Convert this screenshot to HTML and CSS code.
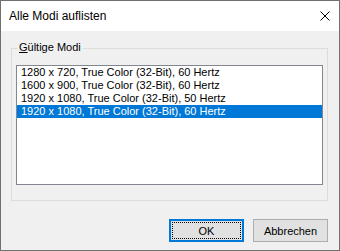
FILE: index.html
```html
<!DOCTYPE html>
<html lang="de">
<head>
<meta charset="utf-8">
<title>Alle Modi auflisten</title>
<link rel="stylesheet" href="styles.css">
</head>
<body>
<div class="window">
  <div class="titlebar">
    <span class="title">Alle Modi auflisten</span>
    <svg class="close" width="10" height="10" viewBox="0 0 10 10" aria-label="Schließen"><path d="M0.5 0.5 L9.5 9.5 M9.5 0.5 L0.5 9.5" stroke="#000" stroke-width="1" fill="none"/></svg>
  </div>
  <div class="client">
    <div class="group">
      <span class="group-label"><u>G</u>ültige Modi</span>
      <ul class="listbox">
        <li class="item">1280 x 720, True Color (32-Bit), 60 Hertz</li>
        <li class="item">1600 x 900, True Color (32-Bit), 60 Hertz</li>
        <li class="item">1920 x 1080, True Color (32-Bit), 50 Hertz</li>
        <li class="item selected">1920 x 1080, True Color (32-Bit), 60 Hertz</li>
      </ul>
    </div>
    <div class="buttons">
      <button class="btn btn-default"><span class="focus">OK</span></button>
      <button class="btn">Abbrechen</button>
    </div>
  </div>
</div>
</body>
</html>
```

FILE: styles.css
```css
html, body {
  margin: 0;
  padding: 0;
  background: #f0f0f0;
}

.window {
  box-sizing: border-box;
  width: 340px;
  height: 251px;
  border: 1px solid #707070;
  display: flex;
  flex-direction: column;
  font-family: "Liberation Sans", Arial, sans-serif;
  color: #000;
}

.titlebar {
  height: 30px;
  background: #fff;
  display: flex;
  align-items: center;
  justify-content: space-between;
  padding: 0 9px 0 8px;
  flex: none;
}

.title {
  font-size: 12px;
}

.close {
  display: block;
}

.client {
  flex: 1;
  background: #f0f0f0;
  display: flex;
  flex-direction: column;
  padding: 17px 11px 0 10px;
}

.group {
  position: relative;
  box-sizing: border-box;
  height: 153px;
  border: 1px solid #dcdcdc;
  padding: 16px 4px 0 4px;
}

.group-label {
  position: absolute;
  top: -8px;
  left: 5px;
  padding: 0 2px;
  background: #f0f0f0;
  font-size: 11px;
  line-height: 13px;
}

.group-label u {
  text-decoration-thickness: 1px;
  text-underline-offset: 1px;
}

.listbox {
  box-sizing: border-box;
  height: 120px;
  margin: 0;
  padding: 0;
  list-style: none;
  background: #fff;
  border: 1px solid #828790;
}

.item {
  height: 13px;
  line-height: 13px;
  font-size: 11px;
  padding-left: 4px;
  white-space: nowrap;
}

.item.selected {
  background: #0078d7;
  color: #fff;
}

.buttons {
  display: flex;
  justify-content: flex-end;
  gap: 9px;
  margin-top: 18px;
}

.btn {
  box-sizing: border-box;
  width: 75px;
  height: 23px;
  margin: 0;
  padding: 0;
  border: 1px solid #adadad;
  background: #e1e1e1;
  font-family: "Liberation Sans", Arial, sans-serif;
  font-size: 11px;
  color: #000;
  display: flex;
  align-items: center;
  justify-content: center;
}

.btn-default {
  border: 2px solid #0078d7;
  padding: 1px;
}

.btn-default .focus {
  box-sizing: border-box;
  width: 100%;
  height: 100%;
  border: 1px dotted #000;
  display: flex;
  align-items: center;
  justify-content: center;
}
```
